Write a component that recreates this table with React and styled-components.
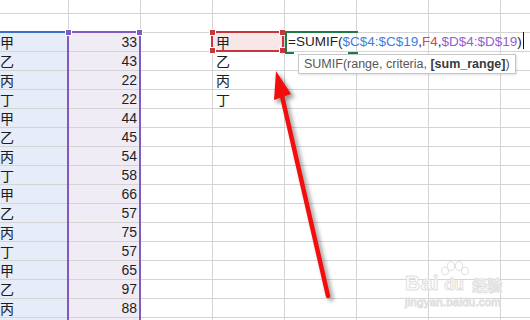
import React from 'react';
import styled, { createGlobalStyle } from 'styled-components';

const GlobalStyle = createGlobalStyle`
  html, body {
    margin: 0;
    padding: 0;
    background: #ffffff;
    overflow: hidden;
  }
  body {
    font-family: "Liberation Sans", Arial, sans-serif;
  }
`;

const rows = [
  ['甲', 33], ['乙', 43], ['丙', 22], ['丁', 22],
  ['甲', 44], ['乙', 45], ['丙', 54], ['丁', 58],
  ['甲', 66], ['乙', 57], ['丙', 75], ['丁', 57],
  ['甲', 65], ['乙', 97], ['丙', 88], ['', ''],
];

const lookup = ['甲', '乙', '丙', '丁'];

const tints = {
  blue: '#e7edf8',
  purple: '#f0ecf6',
  pink: '#f8e7e7',
};

const Page = styled.div`
  position: relative;
  width: 530px;
  height: 320px;
  overflow: hidden;
  background: #ffffff;
`;

const Sheet = styled.div`
  display: grid;
  grid-template-columns: repeat(8, 72px);
  grid-template-rows: 14px;
  grid-auto-rows: 19px;
  margin-left: -3px;
`;

const Cell = styled.div`
  box-sizing: border-box;
  display: flex;
  align-items: flex-end;
  justify-content: ${(p) => (p.$right ? 'flex-end' : 'flex-start')};
  padding: 0 ${(p) => (p.$right ? '3px' : '2px')} 1px 3px;
  border-right: 1px solid #d4d4d4;
  border-bottom: 1px solid #d4d4d4;
  background: ${(p) => (p.$tint ? tints[p.$tint] : '#ffffff')};
  color: #1e1e1e;
  font-family: ${(p) =>
    p.$right
      ? '"Liberation Sans", Arial, sans-serif'
      : '"Noto Sans CJK SC", "Noto Sans", sans-serif'};
  font-size: 14px;
  line-height: 15px;
  white-space: nowrap;
  position: relative;
  z-index: ${(p) => (p.$front ? 2 : 'auto')};
`;

const Formula = styled.span`
  font-family: "Liberation Sans", Arial, sans-serif;
  font-size: 13.5px;
  line-height: 15px;
  color: #1e1e1e;
  padding-bottom: 1px;
  display: flex;
  align-items: flex-end;
`;

const Ref = styled.span`
  color: ${(p) => p.$color};
`;

const Caret = styled.span`
  display: inline-block;
  width: 1px;
  height: 17px;
  background: #111;
  margin-left: 1px;
  align-self: center;
`;

const RangeBox = styled.div`
  position: absolute;
  box-sizing: border-box;
  left: ${(p) => p.$x}px;
  top: ${(p) => p.$y}px;
  width: ${(p) => p.$w}px;
  height: ${(p) => p.$h}px;
  border: 2px solid ${(p) => p.$color};
  pointer-events: none;
  z-index: 3;
`;

const Handle = styled.span`
  position: absolute;
  width: 5px;
  height: 5px;
  background: ${(p) => p.$color};
  border: 1px solid #ffffff;
  ${(p) => (p.$top ? 'top: -4px;' : 'bottom: -4px;')}
  ${(p) => (p.$left ? 'left: -4px;' : 'right: -4px;')}
`;

const TopLine = styled.div`
  position: absolute;
  left: 0;
  top: 31px;
  width: 67px;
  height: 2px;
  background: #3c6fc6;
  z-index: 3;
`;

const EditBox = styled.div`
  position: absolute;
  box-sizing: border-box;
  left: 285px;
  top: 31px;
  width: 73px;
  height: 21px;
  border-top: 2px solid #1f7a47;
  border-left: 2px solid #1f7a47;
  z-index: 3;

  &::before,
  &::after {
    content: '';
    position: absolute;
    bottom: -2px;
    height: 2px;
    background: #1f7a47;
  }
  &::before {
    left: -2px;
    width: 9px;
  }
  &::after {
    right: 0;
    width: 10px;
  }
`;

const Tooltip = styled.div`
  position: absolute;
  left: 298px;
  top: 54px;
  width: 218px;
  height: 20px;
  box-sizing: border-box;
  display: flex;
  align-items: center;
  padding: 0 0 0 5px;
  background: #ffffff;
  border: 1px solid #c6c6c6;
  box-shadow: 1px 1px 2px rgba(0, 0, 0, 0.12);
  font-family: "Liberation Sans", Arial, sans-serif;
  font-size: 12.5px;
  color: #575757;
  white-space: nowrap;
  z-index: 4;

  b {
    color: #3a3a3a;
  }
`;

const Overlay = styled.svg`
  position: absolute;
  left: 0;
  top: 0;
  z-index: 5;
  pointer-events: none;
`;

const Watermark = styled.div`
  position: absolute;
  left: 405px;
  top: 261px;
  width: 100px;
  z-index: 4;
  color: rgba(255, 255, 255, 0.85);
  -webkit-text-stroke: 1px #e0e0e0;
  font-family: "Liberation Sans", Arial, sans-serif;
  pointer-events: none;
`;

const MarkRow = styled.div`
  display: flex;
  align-items: flex-end;
  height: 32px;
`;

const MarkWord = styled.span`
  font-size: 21px;
  font-weight: bold;
  line-height: 21px;
  letter-spacing: 0.5px;
`;

const MarkPaw = styled.div`
  position: relative;
  width: 30px;
  height: 32px;
  margin: 0 1px;
`;

const MarkDu = styled.span`
  position: absolute;
  left: 4px;
  bottom: 0;
  font-size: 16px;
  font-weight: bold;
  line-height: 16px;
`;

const MarkCn = styled.span`
  font-family: "Noto Sans CJK SC", sans-serif;
  font-size: 15px;
  line-height: 16px;
  font-weight: bold;
  margin-left: 1px;
`;

const MarkUrl = styled.div`
  font-size: 11.5px;
  line-height: 14px;
  letter-spacing: 0.2px;
  margin-top: 2px;
`;

function Arrow() {
  return (
    <Overlay width="530" height="320" viewBox="0 0 530 320">
      <defs>
        <filter id="shade" x="-50%" y="-50%" width="200%" height="200%">
          <feGaussianBlur stdDeviation="2" />
        </filter>
      </defs>
      <g transform="translate(3 3)" fill="#555" stroke="#555" opacity="0.6" filter="url(#shade)">
        <line x1="328" y1="296" x2="282" y2="96" strokeWidth="4.5" strokeLinecap="round" />
        <polygon points="276,71 291,94 274,100" />
      </g>
      <line x1="328" y1="296" x2="282" y2="96" stroke="#f50d0d" strokeWidth="4.5" strokeLinecap="round" />
      <polygon points="276,71 291,94 274,100" fill="#f50d0d" />
    </Overlay>
  );
}

function BaiduMark() {
  return (
    <Watermark>
      <MarkRow>
        <MarkWord>Bai</MarkWord>
        <MarkPaw>
          <svg width="30" height="16" viewBox="0 0 30 16" style={{ position: 'absolute', left: 0, top: 0 }}>
            <g fill="rgba(255,255,255,0.85)" stroke="#e0e0e0" strokeWidth="1">
              <ellipse cx="5" cy="10" rx="3.5" ry="4" />
              <ellipse cx="11" cy="5" rx="3.5" ry="4.5" />
              <ellipse cx="19" cy="5" rx="3.5" ry="4.5" />
              <ellipse cx="25" cy="10" rx="3.5" ry="4" />
            </g>
          </svg>
          <MarkDu>du</MarkDu>
        </MarkPaw>
        <MarkCn>经验</MarkCn>
      </MarkRow>
      <MarkUrl>jingyan.baidu.com</MarkUrl>
    </Watermark>
  );
}

export default function App() {
  const total = rows.length + 2;
  const cells = [];

  for (let r = 0; r < total; r++) {
    const data = r >= 2 ? rows[r - 2] : null;
    for (let c = 0; c < 8; c++) {
      const key = `${r}-${c}`;
      if (c === 0) {
        cells.push(
          <Cell key={key} $tint={data ? 'blue' : null}>
            {data ? data[0] : ''}
          </Cell>
        );
      } else if (c === 1) {
        cells.push(
          <Cell key={key} $tint={data ? 'purple' : null} $right>
            {data ? data[1] : ''}
          </Cell>
        );
      } else if (c === 3) {
        const item = r >= 2 && r < 6 ? lookup[r - 2] : '';
        cells.push(
          <Cell key={key} $tint={r === 2 ? 'pink' : null}>
            {item}
          </Cell>
        );
      } else if (c === 4 && r === 2) {
        cells.push(
          <Cell key={key} $front>
            <Formula>
              =SUMIF(<Ref $color="#3f7fdc">$C$4:$C$19</Ref>,<Ref $color="#e4452f">F4</Ref>,
              <Ref $color="#9461cf">$D$4:$D$19</Ref>)
              <Caret />
            </Formula>
          </Cell>
        );
      } else {
        cells.push(<Cell key={key} />);
      }
    }
  }

  return (
    <Page>
      <GlobalStyle />
      <Sheet>{cells}</Sheet>
      <TopLine />
      <RangeBox $x={67} $y={31} $w={74} $h={300} $color="#7f5bbf">
        <Handle $color="#7f5bbf" $top $left />
        <Handle $color="#7f5bbf" $top />
      </RangeBox>
      <RangeBox $x={211} $y={31} $w={73} $h={21} $color="#c2383c">
        <Handle $color="#c2383c" $top $left />
        <Handle $color="#c2383c" $top />
        <Handle $color="#c2383c" $left />
        <Handle $color="#c2383c" />
      </RangeBox>
      <EditBox />
      <Tooltip>
        SUMIF(range, criteria,&nbsp;<b>[sum_range]</b>)
      </Tooltip>
      <BaiduMark />
      <Arrow />
    </Page>
  );
}
